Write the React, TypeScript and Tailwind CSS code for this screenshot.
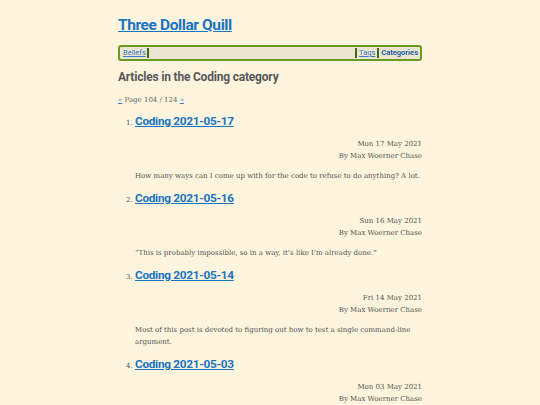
const posts = [
  {
    title: "Coding 2021-05-17",
    date: "Mon 17 May 2021",
    summary: "How many ways can I come up with for the code to refuse to do anything? A lot.",
  },
  {
    title: "Coding 2021-05-16",
    date: "Sun 16 May 2021",
    summary: "\u201cThis is probably impossible, so in a way, it\u2019s like I\u2019m already done.\u201d",
  },
  {
    title: "Coding 2021-05-14",
    date: "Fri 14 May 2021",
    summary: "Most of this post is devoted to figuring out how to test a single command-line argument.",
  },
  {
    title: "Coding 2021-05-03",
    date: "Mon 03 May 2021",
    summary: "Some more refactoring, and a look at what I need next.",
  },
];

const sans = "font-['Roboto','Noto_Sans',sans-serif]";
const serif = "font-['DejaVu_Serif','Liberation_Serif',serif]";

export default function App() {
  return (
    <div className={`h-[405px] overflow-hidden bg-[#fcf4dc] ${serif} text-[#555]`}>
      <div className="mx-auto w-[304px] pt-[14px]">
        <h1 className={`${sans} text-[15.5px] font-bold leading-[22px] tracking-[-0.4px]`}>
          <a href="#" className="text-[#1a73c4] underline">
            Three Dollar Quill
          </a>
        </h1>

        <nav className="mt-[9px] flex h-[16px] items-center rounded-[3px] border-2 border-[#6a9a22] bg-[#ebe4cf] px-[2px] text-[7.5px] leading-[10px]">
          <a href="#" className={`${sans} border-r-2 border-[#3f6a10] px-[1px] text-[#3b7cc0] underline`}>
            Beliefs
          </a>
          <div className="flex-1" />
          <a href="#" className={`${sans} border-x-2 border-[#3f6a10] px-[2px] text-[#3b7cc0] underline`}>
            Tags
          </a>
          <a href="#" className={`${sans} pl-[2px] font-bold text-[#1f5fa8]`}>
            Categories
          </a>
        </nav>

        <h2 className={`${sans} mt-[8px] text-[12px] font-bold leading-[16px] tracking-[-0.2px] text-[#58595b]`}>
          Articles in the Coding category
        </h2>

        <p className="mt-[9px] text-[7px] leading-[12px] text-[#666]">
          <a href="#" className="text-[#3b7cc0] underline">«</a> Page 104 / 124{" "}
          <a href="#" className="text-[#3b7cc0] underline">»</a>
        </p>

        <ol className="mt-[7px] list-decimal pl-[17px] text-[7px] leading-[12px] marker:text-[7px]">
          {posts.map((p) => (
            <li key={p.title} className="mb-[8px]">
              <a href="#" className={`${sans} text-[11.8px] font-bold leading-[16px] tracking-[-0.3px] text-[#1a73c4] underline`}>
                {p.title}
              </a>
              <div className="mt-[9px] text-right">
                <div>{p.date}</div>
                <div>By Max Woerner Chase</div>
              </div>
              <p className="mt-[8px]">{p.summary}</p>
            </li>
          ))}
        </ol>
      </div>
    </div>
  );
}
